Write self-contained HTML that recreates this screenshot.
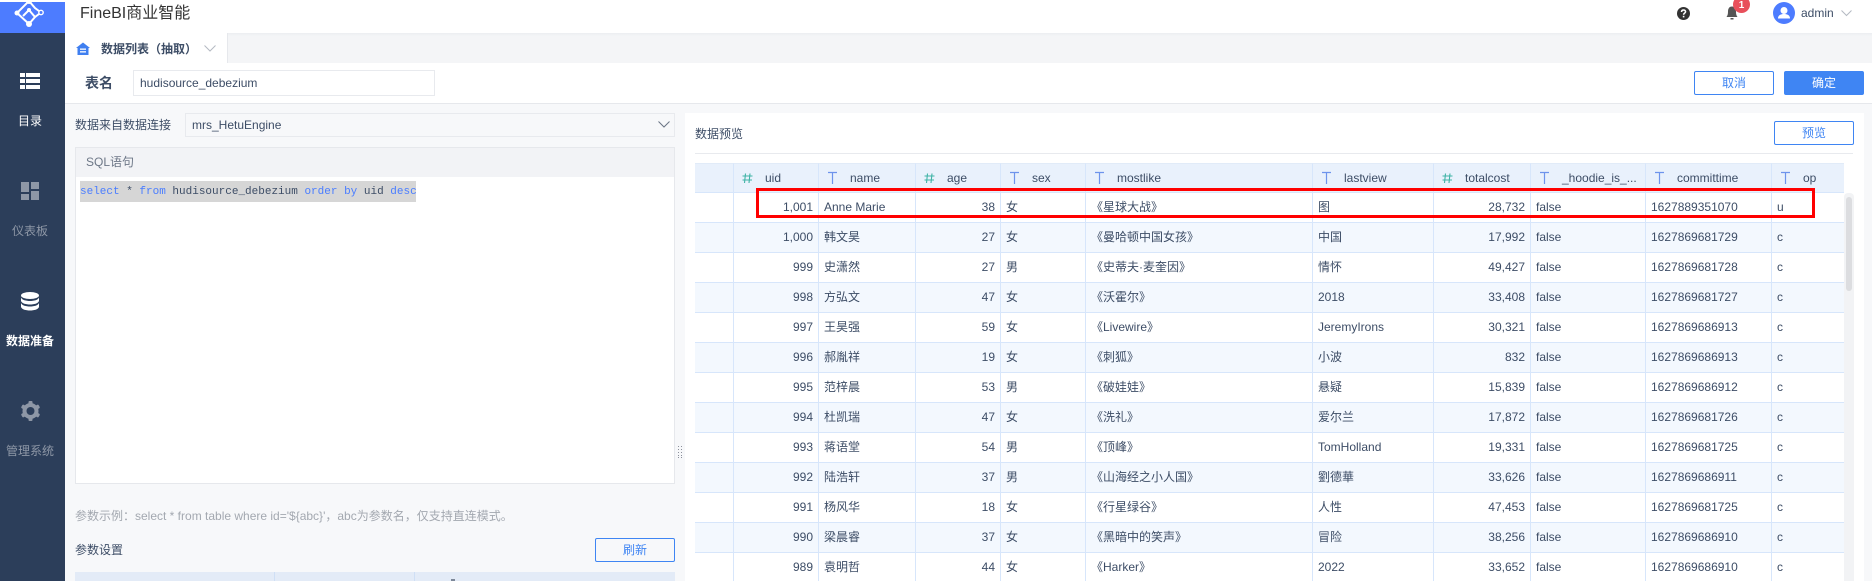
<!DOCTYPE html>
<html lang="zh-CN">
<head>
<meta charset="utf-8">
<title>FineBI商业智能</title>
<style>
*{box-sizing:border-box}
html,body{margin:0;padding:0;width:1872px;height:581px;overflow:hidden;background:#f7f8fa}
body{position:relative;font:12px/16px "Liberation Sans","Noto Sans CJK SC",sans-serif;color:#3d4d66}
.a{position:absolute;white-space:nowrap}
.side{left:0;top:33px;width:65px;height:548px;background:#2c3e5a}
.lab{left:0;width:60px;text-align:center;color:#8e97a6;height:16px}
.lab.on{color:#fff}
.btn{height:24px;width:80px;border:1px solid #3f85f3;border-radius:2px;color:#3f85f3;text-align:center;line-height:22px;background:#fff}
table{position:absolute;left:695px;top:163px;width:1149px;border-collapse:separate;border-spacing:0;table-layout:fixed}
td,th{height:30px;padding:0 5px 2px 5px;font-weight:normal;border-right:1px solid #d7e6fb;border-bottom:1px solid #d7e6fb;overflow:hidden;white-space:nowrap;text-align:left;color:#3d4d66;line-height:16px}
th{background:#e9f1fc;position:relative;border-top:1px solid #e1ebf8;padding:0}
tr.e td{background:#f3f8fe}
td:last-child,th:last-child{border-right:0}
td.n{text-align:right}
th span{position:absolute;left:31px;top:6px}
th svg{position:absolute;left:8px;top:8px}
</style>
</head>
<body>
<!-- top header -->
<div class="a" style="left:0;top:0;width:1872px;height:33px;background:#fff"></div>
<div class="a" style="left:0;top:2px;width:65px;height:31px;background:#4d7cff;overflow:hidden">
<svg width="65" height="31" viewBox="0 0 65 31" style="position:absolute;left:0;top:0">
<g fill="none" stroke="#fff" stroke-width="2"><path d="M29 -1L17 11L29 22"/><path d="M23 14L29 8L35 15L29 22"/><path d="M29 -1L35 6L39 9"/><path d="M35 15L39 12"/></g>
<g fill="#fff"><circle cx="29" cy="22" r="3"/><circle cx="17" cy="11" r="2.500"/><circle cx="29" cy="-1" r="3"/><circle cx="29" cy="8" r="2"/></g>
<circle cx="41" cy="10.500" r="2.200" fill="none" stroke="#fff" stroke-width="1.400"/>
</svg>
</div>
<div class="a" style="left:80px;top:3px;font-size:16px;line-height:22px;color:#333">FineBI商业智能</div>

<!-- help -->
<svg class="a" style="left:1677px;top:7px" width="13" height="13" viewBox="0 0 13 13"><circle cx="6.500" cy="6.500" r="6.500" fill="#333"/><path d="M4.500 5Q4.600 3 6.500 3T8.600 4.800C8.600 6 6.600 6.100 6.600 7.700" fill="none" stroke="#fff" stroke-width="1.500"/><rect x="5.800" y="8.800" width="1.600" height="1.600" fill="#fff"/></svg>
<!-- bell -->
<svg class="a" style="left:1726px;top:6px" width="12" height="14" viewBox="0 0 12 14"><path d="M6 0.500C3 0.500 2 3 2 5.500C2 8.500 1.400 9.700 0.500 11H11.500C10.600 9.700 10 8.500 10 5.500C10 3 9 0.500 6 0.500Z" fill="#555"/><rect x="4.500" y="12" width="3" height="1.500" fill="#555"/></svg>
<div class="a" style="left:1733px;top:-4px;width:17px;height:17px;border-radius:50%;background:#e8505b;color:#fff;font-size:10px;line-height:17px;text-align:center;font-weight:bold;padding-top:1px">1</div>
<!-- avatar -->
<svg class="a" style="left:1773px;top:2px" width="22" height="22" viewBox="0 0 22 22"><circle cx="11" cy="11" r="11" fill="#4d7cff"/><circle cx="11" cy="8.500" r="3.500" fill="#fff"/><path d="M5 16.500C5 13 8 12 11 12S17 13 17 16.500Z" fill="#fff"/></svg>
<div class="a" style="left:1801px;top:5px;color:#3d4d66">admin</div>
<svg class="a" style="left:1841px;top:10px" width="11" height="7" viewBox="0 0 11 7"><path d="M0.500 0.500L5.500 5.500L10.500 0.500" fill="none" stroke="#b4b9c2"/></svg>

<!-- tab row -->
<div class="a" style="left:65px;top:33px;width:1807px;height:30px;background:#f4f5f7"></div>
<div class="a" style="left:65px;top:33px;width:1807px;height:3px;background:linear-gradient(#eceef1,#f4f5f7)"></div>
<div class="a" style="left:65px;top:33px;width:163px;height:30px;background:#fff;border-right:1px solid #e6e8ec"></div>
<svg class="a" style="left:76px;top:42px" width="14" height="13" viewBox="0 0 14 13"><path d="M7 0.500L14 6H12.500V13H1.500V6H0Z" fill="#3f7ff0"/><rect x="4" y="6.500" width="6" height="1.300" fill="#fff"/><rect x="4" y="9.200" width="6" height="1.300" fill="#fff"/></svg>
<div class="a" style="left:101px;top:41px;font-weight:bold;color:#3d4d66">数据列表（抽取）</div>
<svg class="a" style="left:204px;top:45px" width="12" height="7" viewBox="0 0 12 7"><path d="M0.500 0.500L6 6L11.500 0.500" fill="none" stroke="#b4b9c2"/></svg>

<!-- name row -->
<div class="a" style="left:65px;top:63px;width:1807px;height:41px;background:#fff;border-bottom:1px solid #e6e8ec"></div>
<div class="a" style="left:85px;top:74px;font-size:14px;line-height:18px;font-weight:bold;color:#3d4d66">表名</div>
<div class="a" style="left:133px;top:70px;width:302px;height:26px;border:1px solid #e8eaee;background:#fff;padding:0 6px;line-height:24px">hudisource_debezium</div>
<div class="a btn" style="left:1694px;top:71px">取消</div>
<div class="a btn" style="left:1784px;top:71px;background:#3f85f3;color:#fff">确定</div>

<!-- left panel -->
<div class="a" style="left:75px;top:117px">数据来自数据连接</div>
<div class="a" style="left:185px;top:113px;width:490px;height:24px;border:1px solid #e8eaee;background:#f7f8fa;padding:0 6px;line-height:22px">mrs_HetuEngine</div>
<svg class="a" style="left:658px;top:121px" width="12" height="7" viewBox="0 0 12 7"><path d="M0.500 0.500L6 6L11.500 0.500" fill="none" stroke="#6a7484"/></svg>
<div class="a" style="left:75px;top:147px;width:600px;height:337px;background:#fff;border:1px solid #e6e8ec"></div>
<div class="a" style="left:76px;top:148px;width:598px;height:29px;background:#f2f3f6"></div>
<div class="a" style="left:86px;top:154px;color:#6d7787">SQL语句</div>
<div class="a" style="left:80px;top:181px;width:336px;height:21px;background:#d6d6d6"></div>
<div class="a" style="left:80px;top:184px;font:11px/17px 'Liberation Mono',monospace;color:#3d4d66"><span style="color:#4a7dff">select</span> * <span style="color:#4a7dff">from</span> hudisource_debezium <span style="color:#4a7dff">order</span> <span style="color:#4a7dff">by</span> uid <span style="color:#4a7dff">desc</span></div>
<div class="a" style="left:75px;top:508px;color:#a3a8b0">参数示例：select * from table where id='${abc}'，abc为参数名，仅支持直连模式。</div>
<div class="a" style="left:75px;top:542px;color:#3d4d66">参数设置</div>
<div class="a btn" style="left:595px;top:538px;background:#f7f8fa">刷新</div>
<div class="a" style="left:75px;top:572px;width:600px;height:9px;background:#e3ebf7"></div>
<div class="a" style="left:274px;top:572px;width:1px;height:9px;background:#cfdff5"></div>
<div class="a" style="left:414px;top:572px;width:1px;height:9px;background:#cfdff5"></div>
<div class="a" style="left:451px;top:579px;width:4px;height:2px;background:#7d8899"></div>
<svg class="a" style="left:678px;top:446px" width="5" height="13" viewBox="0 0 5 13"><g fill="#8b8f9a"><rect x="0" y="0" width="1" height="1"/><rect x="3" y="0" width="1" height="1"/><rect x="0" y="3" width="1" height="1"/><rect x="3" y="3" width="1" height="1"/><rect x="0" y="6" width="1" height="1"/><rect x="3" y="6" width="1" height="1"/><rect x="0" y="9" width="1" height="1"/><rect x="3" y="9" width="1" height="1"/><rect x="0" y="11" width="1" height="1"/><rect x="3" y="11" width="1" height="1"/></g></svg>

<!-- right panel -->
<div class="a" style="left:685px;top:113px;width:1179px;height:468px;background:#fff"></div>
<div class="a" style="left:695px;top:126px;color:#3d4d66">数据预览</div>
<div class="a btn" style="left:1774px;top:121px">预览</div>
<div class="a" style="left:695px;top:153px;width:1158px;height:1px;background:#e8eaee"></div>

<table>
<colgroup><col style="width:39px"><col style="width:85px"><col style="width:97px"><col style="width:85px"><col style="width:85px"><col style="width:227px"><col style="width:121px"><col style="width:97px"><col style="width:115px"><col style="width:126px"><col style="width:72px"></colgroup>
<tr>
<th></th>
<th><svg width="11" height="12" viewBox="0 0 11 12"><path d="M3.500 1.500L2.500 11M8 1.500L7 11M0.500 4H10.500M0.500 8H10" fill="none" stroke="#3fb3a6" stroke-width="1.100"/></svg><span>uid</span></th>
<th><svg width="11" height="13" viewBox="0 0 11 13" style="top:7px"><path d="M1 1.500H10M5.500 1.500V13" fill="none" stroke="#6d93ec" stroke-width="1.200"/></svg><span>name</span></th>
<th><svg width="11" height="12" viewBox="0 0 11 12"><path d="M3.500 1.500L2.500 11M8 1.500L7 11M0.500 4H10.500M0.500 8H10" fill="none" stroke="#3fb3a6" stroke-width="1.100"/></svg><span>age</span></th>
<th><svg width="11" height="13" viewBox="0 0 11 13" style="top:7px"><path d="M1 1.500H10M5.500 1.500V13" fill="none" stroke="#6d93ec" stroke-width="1.200"/></svg><span>sex</span></th>
<th><svg width="11" height="13" viewBox="0 0 11 13" style="top:7px"><path d="M1 1.500H10M5.500 1.500V13" fill="none" stroke="#6d93ec" stroke-width="1.200"/></svg><span>mostlike</span></th>
<th><svg width="11" height="13" viewBox="0 0 11 13" style="top:7px"><path d="M1 1.500H10M5.500 1.500V13" fill="none" stroke="#6d93ec" stroke-width="1.200"/></svg><span>lastview</span></th>
<th><svg width="11" height="12" viewBox="0 0 11 12"><path d="M3.500 1.500L2.500 11M8 1.500L7 11M0.500 4H10.500M0.500 8H10" fill="none" stroke="#3fb3a6" stroke-width="1.100"/></svg><span>totalcost</span></th>
<th><svg width="11" height="13" viewBox="0 0 11 13" style="top:7px"><path d="M1 1.500H10M5.500 1.500V13" fill="none" stroke="#6d93ec" stroke-width="1.200"/></svg><span>_hoodie_is_...</span></th>
<th><svg width="11" height="13" viewBox="0 0 11 13" style="top:7px"><path d="M1 1.500H10M5.500 1.500V13" fill="none" stroke="#6d93ec" stroke-width="1.200"/></svg><span>committime</span></th>
<th><svg width="11" height="13" viewBox="0 0 11 13" style="top:7px"><path d="M1 1.500H10M5.500 1.500V13" fill="none" stroke="#6d93ec" stroke-width="1.200"/></svg><span>op</span></th>
</tr>
<tr><td></td><td class="n">1,001</td><td>Anne Marie</td><td class="n">38</td><td>女</td><td>《星球大战》</td><td>图</td><td class="n">28,732</td><td>false</td><td>1627889351070</td><td>u</td></tr>
<tr class="e"><td></td><td class="n">1,000</td><td>韩文昊</td><td class="n">27</td><td>女</td><td>《曼哈顿中国女孩》</td><td>中国</td><td class="n">17,992</td><td>false</td><td>1627869681729</td><td>c</td></tr>
<tr><td></td><td class="n">999</td><td>史潇然</td><td class="n">27</td><td>男</td><td>《史蒂夫·麦奎因》</td><td>情怀</td><td class="n">49,427</td><td>false</td><td>1627869681728</td><td>c</td></tr>
<tr class="e"><td></td><td class="n">998</td><td>方弘文</td><td class="n">47</td><td>女</td><td>《沃霍尔》</td><td>2018</td><td class="n">33,408</td><td>false</td><td>1627869681727</td><td>c</td></tr>
<tr><td></td><td class="n">997</td><td>王昊强</td><td class="n">59</td><td>女</td><td>《Livewire》</td><td>JeremyIrons</td><td class="n">30,321</td><td>false</td><td>1627869686913</td><td>c</td></tr>
<tr class="e"><td></td><td class="n">996</td><td>郝胤祥</td><td class="n">19</td><td>女</td><td>《刺狐》</td><td>小波</td><td class="n">832</td><td>false</td><td>1627869686913</td><td>c</td></tr>
<tr><td></td><td class="n">995</td><td>范梓晨</td><td class="n">53</td><td>男</td><td>《破娃娃》</td><td>悬疑</td><td class="n">15,839</td><td>false</td><td>1627869686912</td><td>c</td></tr>
<tr class="e"><td></td><td class="n">994</td><td>杜凯瑞</td><td class="n">47</td><td>女</td><td>《洗礼》</td><td>爱尔兰</td><td class="n">17,872</td><td>false</td><td>1627869681726</td><td>c</td></tr>
<tr><td></td><td class="n">993</td><td>蒋语堂</td><td class="n">54</td><td>男</td><td>《顶峰》</td><td>TomHolland</td><td class="n">19,331</td><td>false</td><td>1627869681725</td><td>c</td></tr>
<tr class="e"><td></td><td class="n">992</td><td>陆浩轩</td><td class="n">37</td><td>男</td><td>《山海经之小人国》</td><td>劉德華</td><td class="n">33,626</td><td>false</td><td>1627869686911</td><td>c</td></tr>
<tr><td></td><td class="n">991</td><td>杨风华</td><td class="n">18</td><td>女</td><td>《行星绿谷》</td><td>人性</td><td class="n">47,453</td><td>false</td><td>1627869681725</td><td>c</td></tr>
<tr class="e"><td></td><td class="n">990</td><td>梁晨睿</td><td class="n">37</td><td>女</td><td>《黑暗中的笑声》</td><td>冒险</td><td class="n">38,256</td><td>false</td><td>1627869686910</td><td>c</td></tr>
<tr><td></td><td class="n">989</td><td>袁明哲</td><td class="n">44</td><td>女</td><td>《Harker》</td><td>2022</td><td class="n">33,652</td><td>false</td><td>1627869686910</td><td>c</td></tr>
</table>

<!-- scrollbar -->
<div class="a" style="left:1844px;top:193px;width:10px;height:388px;background:#f2f3f5;border-radius:4px 4px 0 0"></div>
<div class="a" style="left:1846px;top:197px;width:6px;height:94px;background:#dcdde0;border-radius:3px"></div>

<!-- red box -->
<div class="a" style="left:756px;top:188px;width:1059px;height:30px;border:3px solid #f00"></div>

<!-- sidebar -->
<div class="a side"></div>
<svg class="a" style="left:20px;top:73px" width="20" height="16" viewBox="0 0 20 16"><g fill="#fff"><rect width="5" height="4"/><rect x="6" width="14" height="4"/><rect y="6" width="5" height="4"/><rect x="6" y="6" width="14" height="4"/><rect y="12" width="5" height="4"/><rect x="6" y="12" width="14" height="4"/></g></svg>
<div class="a lab on" style="top:113px">目录</div>
<svg class="a" style="left:21px;top:182px" width="18" height="18" viewBox="0 0 18 18"><g fill="#8e97a6"><rect width="8" height="10"/><rect x="10" width="8" height="7"/><rect y="12" width="8" height="6"/><rect x="10" y="9" width="8" height="9"/></g></svg>
<div class="a lab" style="top:223px">仪表板</div>
<svg class="a" style="left:21px;top:292px" width="18" height="19" viewBox="0 0 18 19"><g fill="#fff"><ellipse cx="9" cy="3.500" rx="9" ry="3.500"/><path d="M0 5.500C1 8 5 9 9 9S17 8 18 5.500V9C17 11.500 13 12.500 9 12.500S1 11.500 0 9Z"/><path d="M0 11C1 13.500 5 14.500 9 14.500S17 13.500 18 11V15C17 17.500 13 18.500 9 18.500S1 17.500 0 15Z"/></g></svg>
<div class="a lab on" style="top:333px;font-weight:bold">数据准备</div>
<svg class="a" style="left:20px;top:401px" width="21" height="20" viewBox="0 0 21 20"><g fill="#8e97a6"><circle cx="10.500" cy="10" r="8"/><rect x="8.500" y="0" width="4" height="20" rx="1"/><rect x="8.500" y="0" width="4" height="20" rx="1" transform="rotate(60 10.500 10)"/><rect x="8.500" y="0" width="4" height="20" rx="1" transform="rotate(120 10.500 10)"/></g><circle cx="10.500" cy="10" r="4" fill="#2c3e5a"/></svg>
<div class="a lab" style="top:443px">管理系统</div>
</body>
</html>
